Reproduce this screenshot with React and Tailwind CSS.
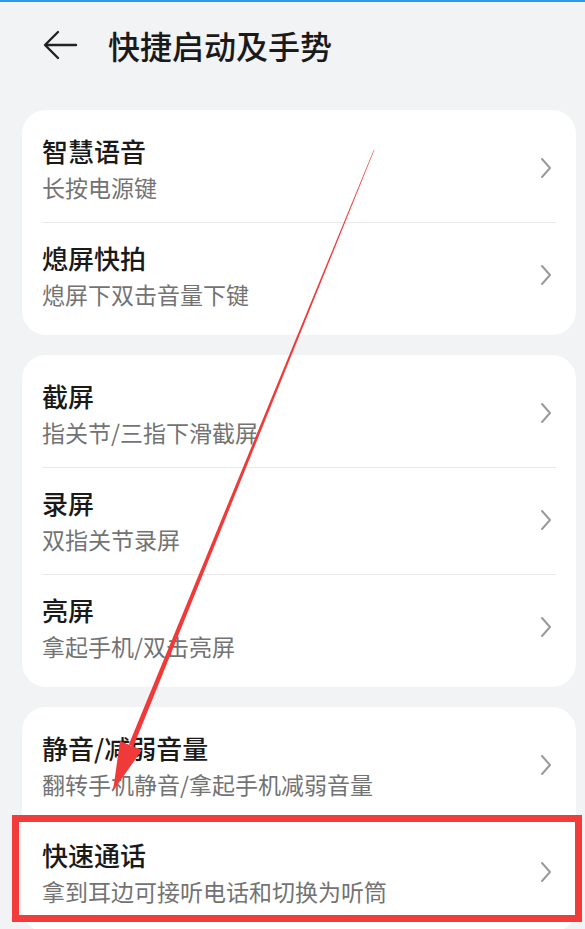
const groups = [
  [
    { title: "智慧语音", sub: "长按电源键" },
    { title: "熄屏快拍", sub: "熄屏下双击音量下键" },
  ],
  [
    { title: "截屏", sub: "指关节/三指下滑截屏" },
    { title: "录屏", sub: "双指关节录屏" },
    { title: "亮屏", sub: "拿起手机/双击亮屏" },
  ],
  [
    { title: "静音/减弱音量", sub: "翻转手机静音/拿起手机减弱音量" },
    { title: "快速通话", sub: "拿到耳边可接听电话和切换为听筒" },
  ],
];

function Chevron() {
  return (
    <svg width="12" height="22" viewBox="0 0 12 22" fill="none">
      <path d="M2 2 L10 11 L2 20" stroke="#9a9a9a" strokeWidth="2" strokeLinecap="round" strokeLinejoin="round" />
    </svg>
  );
}

function Row({ title, sub, last }) {
  return (
    <div>
      <div className="flex items-center pl-[20px] pr-[24px] pt-[19px] pb-[21px]">
        <div className="flex-1">
          <p className="text-[26px] leading-8 font-medium text-[#1a1a1a]">{title}</p>
          <p className="mt-[6px] text-[23px] leading-7 text-[#737373]">{sub}</p>
        </div>
        <Chevron />
      </div>
      {!last && <div className="mx-[20px] border-t border-[#e9e9e9]" />}
    </div>
  );
}

export default function App() {
  return (
    <div
      className="relative h-[929px] overflow-hidden bg-[#f1f3f5]"
      style={{ fontFamily: '"Noto Sans CJK SC", "Noto Sans", sans-serif' }}
    >
      <div className="h-[2px] bg-[#2b9be8]" />
      <header className="flex h-[86px] items-center pl-[42px]">
        <svg width="36" height="32" viewBox="0 0 36 32" fill="none">
          <path d="M34 16 H4 M16 3 L3 16 L16 29" stroke="#222" strokeWidth="2.4" strokeLinecap="round" strokeLinejoin="round" />
        </svg>
        <h1 className="ml-[30px] text-[32px] leading-10 font-medium text-[#1a1a1a]">快捷启动及手势</h1>
      </header>

      <div className="mt-[22px] flex flex-col gap-[20px]">
        {groups.map((g, gi) => (
          <section key={gi} className="ml-[22px] mr-[9px] rounded-[24px] bg-white py-[6px]">
            {g.map((r, i) => (
              <Row key={r.title} {...r} last={i === g.length - 1} />
            ))}
          </section>
        ))}
      </div>

      {/* highlight box */}
      <div className="pointer-events-none absolute left-[12px] top-[815px] h-[107px] w-[570px] border-[7px] border-[#f23b3b]" />

      {/* annotation arrow */}
      <svg className="pointer-events-none absolute inset-0" width="585" height="929" viewBox="0 0 585 929">
        <polygon
          points="374.3,150.1 373.7,149.9 128.8,744.6 133.4,746.6"
          fill="#f03a3a"
        />
        <polygon points="113,791 120,741 142,750" fill="#f03a3a" />
      </svg>
    </div>
  );
}
